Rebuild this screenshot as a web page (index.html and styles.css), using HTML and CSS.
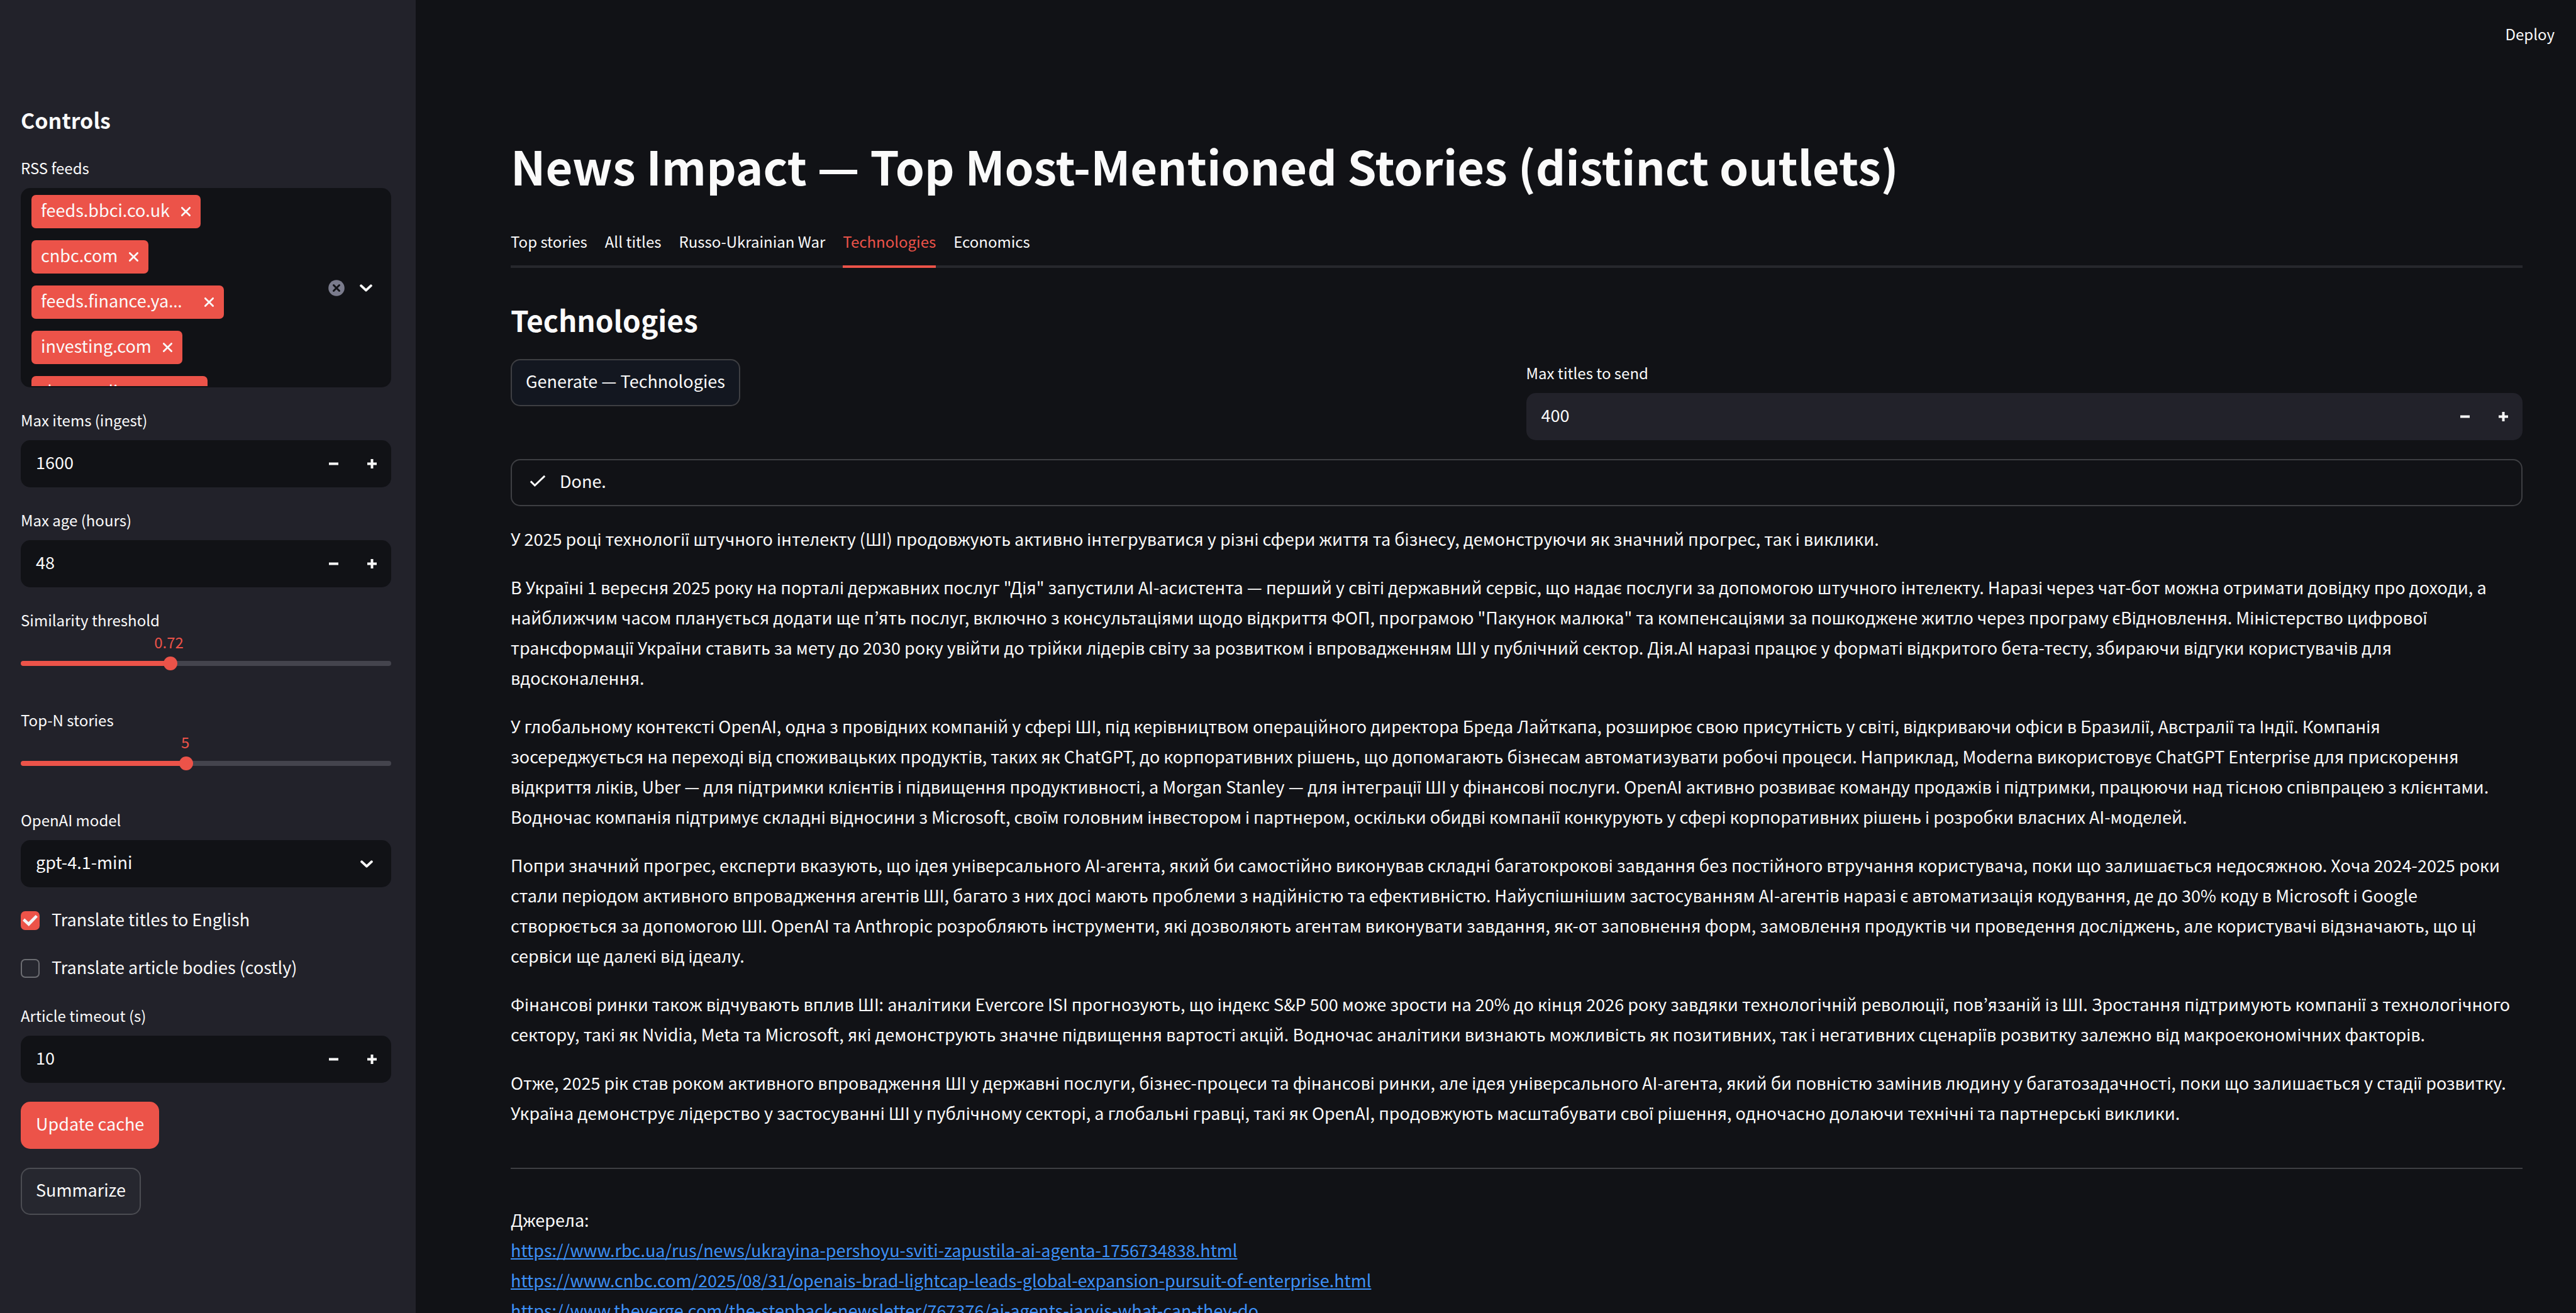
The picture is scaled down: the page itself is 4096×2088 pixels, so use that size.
FILE: index.html
```
<!DOCTYPE html>
<html lang="uk">
<head>
<meta charset="utf-8">
<title>News Impact</title>
<link rel="stylesheet" href="styles.css">
</head>
<body>
<svg class="sprite" aria-hidden="true">
  <symbol id="i-minus" viewBox="0 0 15 15"><path d="M0 7.5h15" stroke="currentColor" stroke-width="4"/></symbol>
  <symbol id="i-plus" viewBox="0 0 15 15"><path d="M0 7.5h15M7.5 0v15" stroke="currentColor" stroke-width="4"/></symbol>
  <symbol id="i-close" viewBox="0 0 15 15"><path d="M1.4 1.4l12.2 12.2M13.6 1.4L1.4 13.6" stroke="currentColor" stroke-width="2.8" stroke-linecap="round"/></symbol>
  <symbol id="i-chevron" viewBox="0 0 20 12"><path d="M2.2 2.4L10 9.6l7.800-7.200" fill="none" stroke="currentColor" stroke-width="4" stroke-linecap="round" stroke-linejoin="round"/></symbol>
  <symbol id="i-clear" viewBox="0 0 26 26"><circle cx="13" cy="13" r="12.800" fill="#7a7b8c"/><path d="M8.500 8.500l9 9M17.500 8.500l-9 9" stroke="#111216" stroke-width="3" stroke-linecap="round"/></symbol>
  <symbol id="i-check" viewBox="0 0 26 20"><path d="M1.800 10.400l6.600 6.600L24.200 1.800" fill="none" stroke="currentColor" stroke-width="3"/></symbol>
</svg>
<div class="app">
  <aside class="sidebar">
    <h2 class="sidebar-title">Controls</h2>

    <div class="field">
      <span class="label" id="feeds-label">RSS feeds</span>
      <div class="multiselect" role="group" aria-labelledby="feeds-label">
        <ul class="tags">
          <li class="tag"><span class="tag-text">feeds.bbci.co.uk</span><button class="icon-btn" aria-label="Remove feeds.bbci.co.uk"><svg class="i-15"><use href="#i-close"/></svg></button></li>
          <li class="tag"><span class="tag-text">cnbc.com</span><button class="icon-btn" aria-label="Remove cnbc.com"><svg class="i-15"><use href="#i-close"/></svg></button></li>
          <li class="tag"><span class="tag-text tag-text-cut">feeds.finance.ya<span class="ellipsis">…</span></span><button class="icon-btn" aria-label="Remove feed"><svg class="i-15"><use href="#i-close"/></svg></button></li>
          <li class="tag"><span class="tag-text">investing.com</span><button class="icon-btn" aria-label="Remove investing.com"><svg class="i-15"><use href="#i-close"/></svg></button></li>
          <li class="tag"><span class="tag-text">theguardian.com</span><button class="icon-btn" aria-label="Remove theguardian.com"><svg class="i-15"><use href="#i-close"/></svg></button></li>
        </ul>
        <div class="multiselect-actions">
          <button class="icon-btn" aria-label="Clear all"><svg class="i-26"><use href="#i-clear"/></svg></button>
          <button class="icon-btn" aria-label="Open"><svg class="i-chevron"><use href="#i-chevron"/></svg></button>
        </div>
      </div>
    </div>

    <div class="field">
      <label class="label" for="max-items">Max items (ingest)</label>
      <div class="number">
        <input class="number-input" id="max-items" type="text" inputmode="numeric" value="1600">
        <button class="step" aria-label="Decrease"><svg class="i-15"><use href="#i-minus"/></svg></button>
        <button class="step" aria-label="Increase"><svg class="i-15"><use href="#i-plus"/></svg></button>
      </div>
    </div>

    <div class="field">
      <label class="label" for="max-age">Max age (hours)</label>
      <div class="number">
        <input class="number-input" id="max-age" type="text" inputmode="numeric" value="48">
        <button class="step" aria-label="Decrease"><svg class="i-15"><use href="#i-minus"/></svg></button>
        <button class="step" aria-label="Increase"><svg class="i-15"><use href="#i-plus"/></svg></button>
      </div>
    </div>

    <div class="slider" style="--pos: 40%">
      <label class="label" for="similarity">Similarity threshold</label>
      <output class="slider-value" for="similarity">0.72</output>
      <input class="range" id="similarity" type="range" min="0.6" max="0.9" step="0.01" value="0.72">
    </div>

    <div class="slider" style="--pos: 44.44%">
      <label class="label" for="top-n">Top-N stories</label>
      <output class="slider-value" for="top-n">5</output>
      <input class="range" id="top-n" type="range" min="1" max="10" value="5">
    </div>

    <div class="field">
      <label class="label" for="model">OpenAI model</label>
      <div class="select">
        <select class="select-input" id="model"><option>gpt-4.1-mini</option></select>
        <svg class="i-chevron select-icon"><use href="#i-chevron"/></svg>
      </div>
    </div>

    <label class="check"><input class="check-box" type="checkbox" checked><span class="check-text">Translate titles to English</span></label>
    <label class="check"><input class="check-box" type="checkbox"><span class="check-text">Translate article bodies (costly)</span></label>

    <div class="field">
      <label class="label" for="timeout">Article timeout (s)</label>
      <div class="number">
        <input class="number-input" id="timeout" type="text" inputmode="numeric" value="10">
        <button class="step" aria-label="Decrease"><svg class="i-15"><use href="#i-minus"/></svg></button>
        <button class="step" aria-label="Increase"><svg class="i-15"><use href="#i-plus"/></svg></button>
      </div>
    </div>

    <button class="btn btn-primary">Update cache</button>
    <button class="btn">Summarize</button>
  </aside>

  <div class="page">
    <header class="toolbar"><button class="deploy">Deploy</button></header>
    <main class="main">
      <h1 class="title">News Impact — Top Most-Mentioned Stories (distinct outlets)</h1>

      <div class="tabs" role="tablist">
        <button class="tab" role="tab">Top stories</button>
        <button class="tab" role="tab">All titles</button>
        <button class="tab" role="tab">Russo-Ukrainian War</button>
        <button class="tab tab-active" role="tab" aria-selected="true">Technologies</button>
        <button class="tab" role="tab">Economics</button>
      </div>

      <h2 class="heading">Technologies</h2>

      <div class="columns">
        <button class="btn btn-dark">Generate — Technologies</button>
        <div class="field">
          <label class="label" for="max-titles">Max titles to send</label>
          <div class="number number-light">
            <input class="number-input" id="max-titles" type="text" inputmode="numeric" value="400">
            <button class="step" aria-label="Decrease"><svg class="i-15"><use href="#i-minus"/></svg></button>
            <button class="step" aria-label="Increase"><svg class="i-15"><use href="#i-plus"/></svg></button>
          </div>
        </div>
      </div>

      <div class="status" role="status"><svg class="i-check"><use href="#i-check"/></svg><span>Done.</span></div>

      <article class="article">
        <p>У 2025 році технології штучного інтелекту (ШІ) продовжують активно інтегруватися у різні сфери життя та бізнесу, демонструючи як значний прогрес, так і виклики.</p>
        <p>В Україні 1 вересня 2025 року на порталі державних послуг "Дія" запустили AI-асистента — перший у світі державний сервіс, що надає послуги за допомогою штучного інтелекту. Наразі через чат-бот можна отримати довідку про доходи, а найближчим часом планується додати ще п’ять послуг, включно з консультаціями щодо відкриття ФОП, програмою "Пакунок малюка" та компенсаціями за пошкоджене житло через програму єВідновлення. Міністерство цифрової трансформації України ставить за мету до 2030 року увійти до трійки лідерів світу за розвитком і впровадженням ШІ у публічний сектор. Дія.АІ наразі працює у форматі відкритого бета-тесту, збираючи відгуки користувачів для вдосконалення.</p>
        <p>У глобальному контексті OpenAI, одна з провідних компаній у сфері ШІ, під керівництвом операційного директора Бреда Лайткапа, розширює свою присутність у світі, відкриваючи офіси в Бразилії, Австралії та Індії. Компанія зосереджується на переході від споживацьких продуктів, таких як ChatGPT, до корпоративних рішень, що допомагають бізнесам автоматизувати робочі процеси. Наприклад, Moderna використовує ChatGPT Enterprise для прискорення відкриття ліків, Uber — для підтримки клієнтів і підвищення продуктивності, а Morgan Stanley — для інтеграції ШІ у фінансові послуги. OpenAI активно розвиває команду продажів і підтримки, працюючи над тісною співпрацею з клієнтами. Водночас компанія підтримує складні відносини з Microsoft, своїм головним інвестором і партнером, оскільки обидві компанії конкурують у сфері корпоративних рішень і розробки власних AI-моделей.</p>
        <p>Попри значний прогрес, експерти вказують, що ідея універсального AI-агента, який би самостійно виконував складні багатокрокові завдання без постійного втручання користувача, поки що залишається недосяжною. Хоча 2024-2025 роки стали періодом активного впровадження агентів ШІ, багато з них досі мають проблеми з надійністю та ефективністю. Найуспішнішим застосуванням AI-агентів наразі є автоматизація кодування, де до 30% коду в Microsoft і Google створюється за допомогою ШІ. OpenAI та Anthropic розробляють інструменти, які дозволяють агентам виконувати завдання, як-от заповнення форм, замовлення продуктів чи проведення досліджень, але користувачі відзначають, що ці сервіси ще далекі від ідеалу.</p>
        <p>Фінансові ринки також відчувають вплив ШІ: аналітики Evercore ISI прогнозують, що індекс S&amp;P 500 може зрости на 20% до кінця 2026 року завдяки технологічній революції, пов’язаній із ШІ. Зростання підтримують компанії з технологічного сектору, такі як Nvidia, Meta та Microsoft, які демонструють значне підвищення вартості акцій. Водночас аналітики визнають можливість як позитивних, так і негативних сценаріїв розвитку залежно від макроекономічних факторів.</p>
        <p>Отже, 2025 рік став роком активного впровадження ШІ у державні послуги, бізнес-процеси та фінансові ринки, але ідея універсального AI-агента, який би повністю замінив людину у багатозадачності, поки що залишається у стадії розвитку. Україна демонструє лідерство у застосуванні ШІ у публічному секторі, а глобальні гравці, такі як OpenAI, продовжують масштабувати свої рішення, одночасно долаючи технічні та партнерські виклики.</p>
      </article>

      <hr class="rule">

      <p class="sources">Джерела:<br>
        <a class="link" href="https://www.rbc.ua/rus/news/ukrayina-pershoyu-sviti-zapustila-ai-agenta-1756734838.html">https://www.rbc.ua/rus/news/ukrayina-pershoyu-sviti-zapustila-ai-agenta-1756734838.html</a><br>
        <a class="link" href="https://www.cnbc.com/2025/08/31/openais-brad-lightcap-leads-global-expansion-pursuit-of-enterprise.html">https://www.cnbc.com/2025/08/31/openais-brad-lightcap-leads-global-expansion-pursuit-of-enterprise.html</a><br>
        <a class="link" href="https://www.theverge.com/the-stepback-newsletter/767376/ai-agents-jarvis-what-can-they-do">https://www.theverge.com/the-stepback-newsletter/767376/ai-agents-jarvis-what-can-they-do</a></p>
    </main>
  </div>
</div>
</body>
</html>
```
FILE: styles.css
```
:root {
  --bg: #111216;
  --panel: #22222a;
  --text: #fafafa;
  --red: #ec5349;
  --line: #3e3f43;
  --font: "Noto Sans CJK KR", "Noto Sans", sans-serif;
}

* { box-sizing: border-box; }

body {
  margin: 0;
  background: var(--bg);
  color: var(--text);
  font: 400 27px/48px var(--font);
}

h1, h2, p, ul { margin: 0; padding: 0; }
button, input, select { font: inherit; color: inherit; }
button { background: none; border: 0; padding: 0; cursor: pointer; }
svg { display: block; }

.sprite { display: none; }
.i-15 { width: 15px; height: 15px; }
.i-26 { width: 26px; height: 26px; }
.i-chevron { width: 20px; height: 12px; }
.i-check { width: 26px; height: 20px; }

.app { display: flex; height: 100vh; overflow: hidden; }

/* Sidebar */
.sidebar {
  flex: 0 0 661px;
  display: flex;
  flex-direction: column;
  align-items: stretch;
  gap: 30px;
  padding: 169px 39px 0 33px;
  background: var(--panel);
}
.sidebar-title { font-size: 34px; line-height: 44px; font-weight: 700; margin-bottom: 2px; }
.label { display: block; font-size: 24px; line-height: 43px; }
.field .label { margin-bottom: 11px; }

.multiselect {
  display: flex;
  height: 317px;
  padding: 9px 28px 0 15px;
  border: 2px solid var(--bg);
  border-radius: 15px;
  background: var(--bg);
  overflow: hidden;
}
.tags {
  flex: 1;
  display: flex;
  flex-direction: column;
  align-items: flex-start;
  gap: 19px;
  list-style: none;
}
.tag {
  flex: none;
  display: flex;
  align-items: center;
  gap: 18px;
  height: 53px;
  padding: 0 16px 0 15px;
  border-radius: 7px;
  background: var(--red);
}
.tag-text { padding-bottom: 5px; white-space: nowrap; }
.tag-text-cut { width: 242px; }
.ellipsis { font-family: "Noto Sans", sans-serif; }
.multiselect-actions { display: flex; align-items: center; gap: 24px; padding-bottom: 9px; }

.number { display: flex; height: 75px; border-radius: 15px; background: var(--bg); }
.number-light { background: var(--panel); }
.number-input {
  flex: 1;
  min-width: 0;
  padding: 0 0 5px 24px;
  border: 0;
  background: none;
  outline: 0;
}
.step { display: grid; place-items: center; width: 61px; }

.slider { padding-bottom: 27px; }
.slider-value {
  display: block;
  width: 80px;
  margin-left: calc(var(--pos) - 40px);
  text-align: center;
  color: var(--red);
  font-size: 24px;
  line-height: 28px;
}
.range {
  appearance: none;
  display: block;
  width: 100%;
  height: 22px;
  margin: 9px 0 0;
  background: none;
}
.range::-webkit-slider-runnable-track {
  height: 8px;
  border-radius: 4px;
  background: linear-gradient(to right, var(--red) var(--pos), #44444d var(--pos));
}
.range::-webkit-slider-thumb {
  appearance: none;
  width: 22px;
  height: 22px;
  margin-top: -7px;
  border-radius: 50%;
  background: var(--red);
}

.select { display: grid; align-items: center; border-radius: 15px; background: var(--bg); }
.select-input {
  grid-area: 1 / 1;
  appearance: none;
  height: 75px;
  padding: 0 60px 5px 24px;
  border: 0;
  background: none;
}
.select-icon { grid-area: 1 / 1; justify-self: end; margin-right: 29px; pointer-events: none; }

.check { display: flex; align-items: center; gap: 19px; height: 46px; }
.check-text { padding-bottom: 5px; }
.check-box {
  appearance: none;
  display: grid;
  place-items: center;
  width: 30px;
  height: 30px;
  margin: 0;
  border: 2px solid #6c6d72;
  border-radius: 7px;
  background: #26272f;
}
.check-box:checked { border-color: var(--red); background: var(--red); }
.check-box:checked::before {
  content: "";
  width: 24px;
  height: 18px;
  background: #f3f3f6;
  clip-path: polygon(0 50%, 13% 31%, 39% 62%, 86% 0, 100% 17%, 41% 100%);
}

.btn {
  align-self: flex-start;
  justify-self: start;
  height: 75px;
  padding: 0 22px 5px;
  border: 2px solid #4b4c52;
  border-radius: 15px;
  background: #26272f;
}
.btn-primary { border-color: var(--red); background: var(--red); }
.btn-dark { border-color: var(--line); background: #131720; }

/* Page */
.page { flex: 1; min-width: 0; }
.toolbar { display: flex; justify-content: flex-end; align-items: center; height: 106px; padding: 0 34px; }
.deploy { font-size: 24px; line-height: 43px; }
.main { padding: 108px 85px 0 151px; }
.title { font-size: 74px; line-height: 98px; font-weight: 700; }

.tabs {
  display: flex;
  gap: 28px;
  margin-top: 50px;
  box-shadow: inset 0 -4px #27282d;
}
.tab { padding-bottom: 17px; border-bottom: 4px solid transparent; font-size: 24px; line-height: 43px; }
.tab-active { color: var(--red); border-color: var(--red); }

.heading { margin-top: 54px; font-size: 46px; line-height: 56px; font-weight: 700; }

.columns { display: grid; grid-template-columns: 1fr 1fr; gap: 30px; margin-top: 35px; }

.status {
  display: flex;
  align-items: center;
  gap: 22px;
  height: 75px;
  margin-top: 30px;
  padding: 0 28px 5px;
  border: 2px solid var(--line);
  border-radius: 15px;
}

.article { display: flex; flex-direction: column; gap: 29px; margin-top: 28px; padding-right: 14px; }
.rule { height: 2px; margin: 63px 0 57px; border: 0; background: var(--line); }
.link { color: #3d91f8; text-decoration: underline; }
```
